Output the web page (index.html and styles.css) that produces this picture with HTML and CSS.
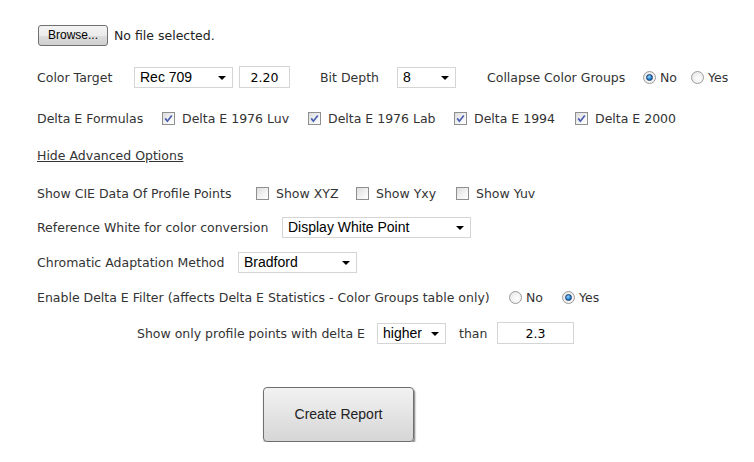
FILE: index.html
```html
<!DOCTYPE html>
<html>
<head>
<meta charset="utf-8">
<link rel="stylesheet" href="styles.css">
</head>
<body>
<div class="page">
  <div class="row r-file">
    <button class="browse">Browse...</button>
    <span class="nofile">No file selected.</span>
  </div>

  <div class="row r1">
    <span class="lbl w-target">Color Target</span>
    <span class="sel w-rec"><select><option>Rec 709</option></select></span>
    <input class="txt w-gamma" value="2.20">
    <span class="lbl w-bit">Bit Depth</span>
    <span class="sel w-depth"><select><option>8</option></select></span>
    <span class="lbl w-collapse">Collapse Color Groups</span>
    <span class="radio on"></span><span class="lbl opt">No</span>
    <span class="radio"></span><span class="lbl opt">Yes</span>
  </div>

  <div class="row r2">
    <span class="lbl w-formulas">Delta E Formulas</span>
    <span class="check on"><svg viewBox="0 0 13 13" width="13" height="13"><path d="M3.2 6.4 L5.4 9.2 L9.8 3.4" fill="none" stroke="#4a5fb0" stroke-width="1.7"/></svg></span><span class="lbl chk-l w-luv">Delta E 1976 Luv</span>
    <span class="check on"><svg viewBox="0 0 13 13" width="13" height="13"><path d="M3.2 6.4 L5.4 9.2 L9.8 3.4" fill="none" stroke="#4a5fb0" stroke-width="1.7"/></svg></span><span class="lbl chk-l w-lab">Delta E 1976 Lab</span>
    <span class="check on"><svg viewBox="0 0 13 13" width="13" height="13"><path d="M3.2 6.4 L5.4 9.2 L9.8 3.4" fill="none" stroke="#4a5fb0" stroke-width="1.7"/></svg></span><span class="lbl chk-l w-94">Delta E 1994</span>
    <span class="check on"><svg viewBox="0 0 13 13" width="13" height="13"><path d="M3.2 6.4 L5.4 9.2 L9.8 3.4" fill="none" stroke="#4a5fb0" stroke-width="1.7"/></svg></span><span class="lbl chk-l">Delta E 2000</span>
  </div>

  <div class="row r3">
    <a class="lbl link">Hide Advanced Options</a>
  </div>

  <div class="row r4">
    <span class="lbl w-cie">Show CIE Data Of Profile Points</span>
    <span class="check"></span><span class="lbl chk-l w-xyz">Show XYZ</span>
    <span class="check"></span><span class="lbl chk-l w-yxy">Show Yxy</span>
    <span class="check"></span><span class="lbl chk-l">Show Yuv</span>
  </div>

  <div class="row r5">
    <span class="lbl w-ref">Reference White for color conversion</span>
    <span class="sel w-white"><select><option>Display White Point</option></select></span>
  </div>

  <div class="row r6">
    <span class="lbl w-chrom">Chromatic Adaptation Method</span>
    <span class="sel w-brad"><select><option>Bradford</option></select></span>
  </div>

  <div class="row r7">
    <span class="lbl w-enable">Enable Delta E Filter (affects Delta E Statistics - Color Groups table only)</span>
    <span class="radio"></span><span class="lbl opt w-no2">No</span>
    <span class="radio on"></span><span class="lbl opt">Yes</span>
  </div>

  <div class="row r8">
    <span class="lbl w-only">Show only profile points with delta E</span>
    <span class="sel w-higher"><select><option>higher</option></select></span>
    <span class="lbl w-than">than</span>
    <input class="txt w-thr" value="2.3">
  </div>

  <div class="row r9">
    <button class="create">Create Report</button>
  </div>
</div>
</body>
</html>
```

FILE: styles.css
```css
html, body {
  margin: 0;
  padding: 0;
  background: #ffffff;
}

.page {
  padding: 23px 0 0 37px;
  display: flex;
  flex-direction: column;
  font-family: "DejaVu Sans", Verdana, sans-serif;
  font-size: 12.5px;
  color: #333333;
}

.row {
  display: flex;
  align-items: center;
  height: 24px;
  flex-shrink: 0;
}

.r1 { margin-top: 18px; }
.r2 { margin-top: 17px; }
.r3 { margin-top: 13px; }
.r4 { margin-top: 14px; }
.r5 { margin-top: 10px; }
.r6 { margin-top: 11px; }
.r7 { margin-top: 11px; }
.r8 { margin-top: 12px; }
.r9 { margin-top: 41px; height: 56px; padding-left: 226px; }

.lbl { white-space: nowrap; }

.browse {
  width: 70px;
  height: 21px;
  margin: 0 0 0 1px;
  padding: 0;
  border: 1px solid #707070;
  border-radius: 3px;
  background: linear-gradient(#f3f3f3, #ebebeb 50%, #dddddd 51%, #cfcfcf);
  font-family: "Liberation Sans", Arial, sans-serif;
  font-size: 12px;
  color: #000;
}
.nofile {
  margin-left: 6px;
  color: #222;
  font-size: 12.5px;
}

.sel {
  position: relative;
  display: inline-block;
  height: 21px;
  box-sizing: border-box;
  border: 1px solid #d5d5d5;
  background: #fff;
}
.sel select {
  appearance: none;
  -webkit-appearance: none;
  border: 0;
  outline: 0;
  background: transparent;
  width: 100%;
  height: 100%;
  padding: 0 0 0 5px;
  margin: 0;
  font-family: "Liberation Sans", Arial, sans-serif;
  font-size: 14px;
  color: #000;
}
.sel::after {
  content: "";
  position: absolute;
  right: 6px;
  top: 8px;
  border-left: 4px solid transparent;
  border-right: 4px solid transparent;
  border-top: 4px solid #000;
}

.txt {
  box-sizing: border-box;
  height: 22px;
  border: 1px solid #d5d5d5;
  padding: 0;
  margin: 0;
  text-align: center;
  font-family: "DejaVu Sans", Verdana, sans-serif;
  font-size: 12.5px;
  color: #000;
}

.w-target { width: 97px; }
.w-rec { width: 99px; }
.w-gamma { width: 51px; margin-left: 6px; }
.w-bit { width: 77px; margin-left: 30px; }
.w-depth { width: 59px; }
.w-collapse { margin-left: 31px; width: 156px; }
.opt { margin-left: 4px; margin-right: 14px; }

.w-formulas { width: 125px; }
.chk-l { margin-left: 7px; }
.w-luv { width: 126px; }
.w-lab { width: 126px; }
.w-94 { width: 101px; }

.link {
  text-decoration: underline;
  color: #333;
}

.w-cie { width: 219px; }
.w-xyz { width: 80px; }
.w-yxy { width: 80px; }

.w-ref { width: 245px; }
.w-white { width: 189px; }

.w-chrom { width: 201px; }
.w-brad { width: 119px; }

.w-enable { width: 472px; }
.w-no2 { margin-right: 19px; }

.w-only { margin-left: 100px; width: 240px; }
.w-higher { width: 69px; }
.w-than { margin-left: 13px; width: 38px; }
.w-thr { width: 77px; }

.check {
  display: inline-flex;
  width: 13px;
  height: 13px;
  box-sizing: border-box;
  border: 1px solid #8e8f8f;
  background: linear-gradient(135deg, #dcdcdc, #f4f4f4 60%, #ffffff);
  flex-shrink: 0;
}
.check svg { margin: -1px; }

.radio {
  display: inline-block;
  width: 13px;
  height: 13px;
  box-sizing: border-box;
  border-radius: 50%;
  border: 1px solid #9a9a9a;
  background: radial-gradient(circle at 60% 60%, #ffffff, #e2e2e2);
  position: relative;
  flex-shrink: 0;
}
.radio.on::after {
  content: "";
  position: absolute;
  left: 2px;
  top: 2px;
  width: 7px;
  height: 7px;
  box-sizing: border-box;
  border-radius: 50%;
  border: 1px solid #1a3b68;
  background: radial-gradient(circle at 40% 35%, #9ad4ff, #1b7fcf 60%, #0e4f8c);
}

.create {
  width: 151px;
  height: 55px;
  margin: 0;
  padding: 0;
  border: 1px solid #6f6f6f;
  border-radius: 4px;
  background: linear-gradient(#f2f2f2, #e4e4e4 50%, #d6d6d6);
  box-shadow: 1px 2px 2px rgba(0,0,0,0.55);
  font-family: "Liberation Sans", Arial, sans-serif;
  font-size: 14px;
  color: #222;
}
```
